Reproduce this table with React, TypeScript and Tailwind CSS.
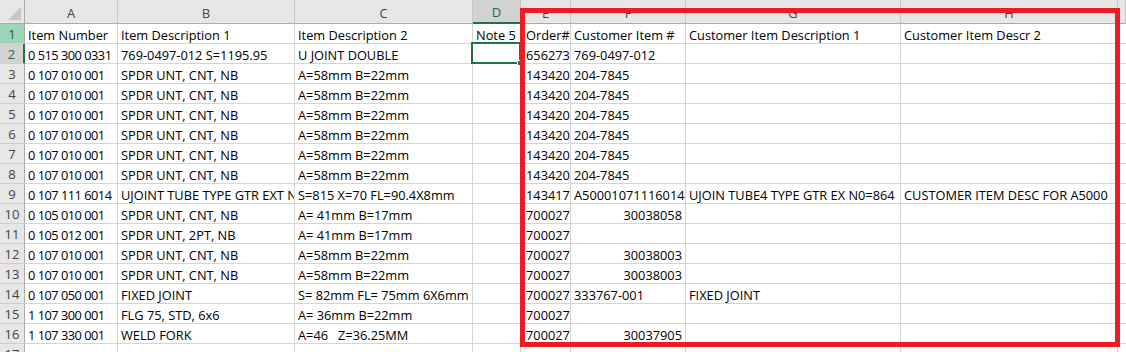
import React from "react";

const cols = ["A", "B", "C", "D", "E", "F", "G", "H", ""];

const rows: string[][] = [
  ["Item Number", "Item Description 1", "Item Description 2", "Note 5", "Order#", "Customer Item #", "Customer Item Description 1", "Customer Item Descr 2"],
  ["0 515 300 0331", "769-0497-012 S=1195.95", "U JOINT DOUBLE", "", "656273", "769-0497-012", "", ""],
  ["0 107 010 001", "SPDR UNT, CNT, NB", "A=58mm B=22mm", "", "143420", "204-7845", "", ""],
  ["0 107 010 001", "SPDR UNT, CNT, NB", "A=58mm B=22mm", "", "143420", "204-7845", "", ""],
  ["0 107 010 001", "SPDR UNT, CNT, NB", "A=58mm B=22mm", "", "143420", "204-7845", "", ""],
  ["0 107 010 001", "SPDR UNT, CNT, NB", "A=58mm B=22mm", "", "143420", "204-7845", "", ""],
  ["0 107 010 001", "SPDR UNT, CNT, NB", "A=58mm B=22mm", "", "143420", "204-7845", "", ""],
  ["0 107 010 001", "SPDR UNT, CNT, NB", "A=58mm B=22mm", "", "143420", "204-7845", "", ""],
  ["0 107 111 6014", "UJOINT TUBE TYPE GTR EXT NO=864", "S=815 X=70 FL=90.4X8mm", "", "143417", "A50001071116014", "UJOIN TUBE4 TYPE GTR EX N0=864", "CUSTOMER ITEM DESC FOR A5000"],
  ["0 105 010 001", "SPDR UNT, CNT, NB", "A= 41mm B=17mm", "", "700027", "30038058", "", ""],
  ["0 105 012 001", "SPDR UNT, 2PT, NB", "A= 41mm B=17mm", "", "700027", "", "", ""],
  ["0 107 010 001", "SPDR UNT, CNT, NB", "A=58mm B=22mm", "", "700027", "30038003", "", ""],
  ["0 107 010 001", "SPDR UNT, CNT, NB", "A=58mm B=22mm", "", "700027", "30038003", "", ""],
  ["0 107 050 001", "FIXED JOINT", "S= 82mm FL= 75mm 6X6mm", "", "700027", "333767-001", "FIXED JOINT", ""],
  ["1 107 300 001", "FLG 75, STD, 6x6", "A= 36mm B=22mm", "", "700027", "", "", ""],
  ["1 107 330 001", "WELD FORK", "A=46\u00a0\u00a0\u00a0Z=36.25MM", "", "700027", "30037905", "", ""],
  ["", "", "", "", "", "", "", ""],
];

// numbers stored as numbers sit on the right
const isNumber = (v: string) => /^\d{8}$/.test(v);

const App = () => {
  return (
    <div
      className="relative w-[1126px] h-[352px] overflow-hidden bg-white text-black"
      style={{ fontFamily: "'Open Sans', 'Liberation Sans', sans-serif" }}
    >
      <div className="grid grid-cols-[25px_93px_177px_178px_48px_50px_115px_215px_217px_1fr] text-[12.8px]">
        {/* header row */}
        <div className="relative h-6 bg-[#e6e6e6] border-r border-b border-[#ababab]">
          <svg className="absolute right-[3px] bottom-[3px]" width="13" height="13" viewBox="0 0 13 13">
            <polygon points="13,0 13,13 0,13" fill="#c6c6c6" />
          </svg>
        </div>
        {cols.map((c, i) => (
          <div
            key={i}
            className={`h-6 pt-1 flex items-center justify-center border-r border-[#c6c6c6] text-[13px] ${
              c === "D"
                ? "bg-[#d2d2d2] border-b-2 border-b-[#217346] text-[#1e6b43]"
                : "bg-[#e6e6e6] border-b border-b-[#ababab] text-[#444]"
            }`}
          >
            {c}
          </div>
        ))}

        {rows.map((r, ri) => (
          <React.Fragment key={ri}>
            <div
              className={`h-5 pt-[2px] flex items-center justify-center text-[13px] border-b border-[#cfcfcf] ${
                ri === 0
                  ? "bg-[#9fd5b7] text-[#1e5a3a] border-r border-r-[#ababab]"
                  : ri === 1
                  ? "bg-[#d2d2d2] text-[#1e6b43] border-r-2 border-r-[#217346]"
                  : "bg-[#e6e6e6] text-[#444] border-r border-r-[#ababab]"
              }`}
            >
              {ri + 1}
            </div>
            {r.map((v, ci) => {
              const active = ri === 1 && ci === 3;
              return (
                <div
                  key={ci}
                  className={`relative h-5 pr-[3px] leading-[22px] whitespace-nowrap border-r border-b border-[#d4d4d4] ${
                    ci === 4 ? "pl-[5px]" : "pl-[3px]"
                  } ${active ? "overflow-visible" : "overflow-hidden"} ${
                    isNumber(v) ? "text-right" : "text-left"
                  } ${ci === 0 && ri > 0 ? "tracking-[-0.5px]" : ""}`}
                >
                  {v}
                  {active && (
                    <div className="absolute -left-[2px] -top-[2px] -right-px -bottom-px border-2 border-[#217346]">
                      <div className="absolute -right-[4px] -bottom-[4px] w-[6px] h-[6px] bg-[#217346] border border-white" />
                    </div>
                  )}
                </div>
              );
            })}
            <div className="h-5 border-b border-[#d4d4d4]" />
          </React.Fragment>
        ))}
      </div>

      {/* red highlight box drawn over the sheet */}
      <div className="absolute left-[520px] top-[8px] w-[600px] h-[339px] border-[5px] border-[#ed1c24]" />
    </div>
  );
};

export default App;
